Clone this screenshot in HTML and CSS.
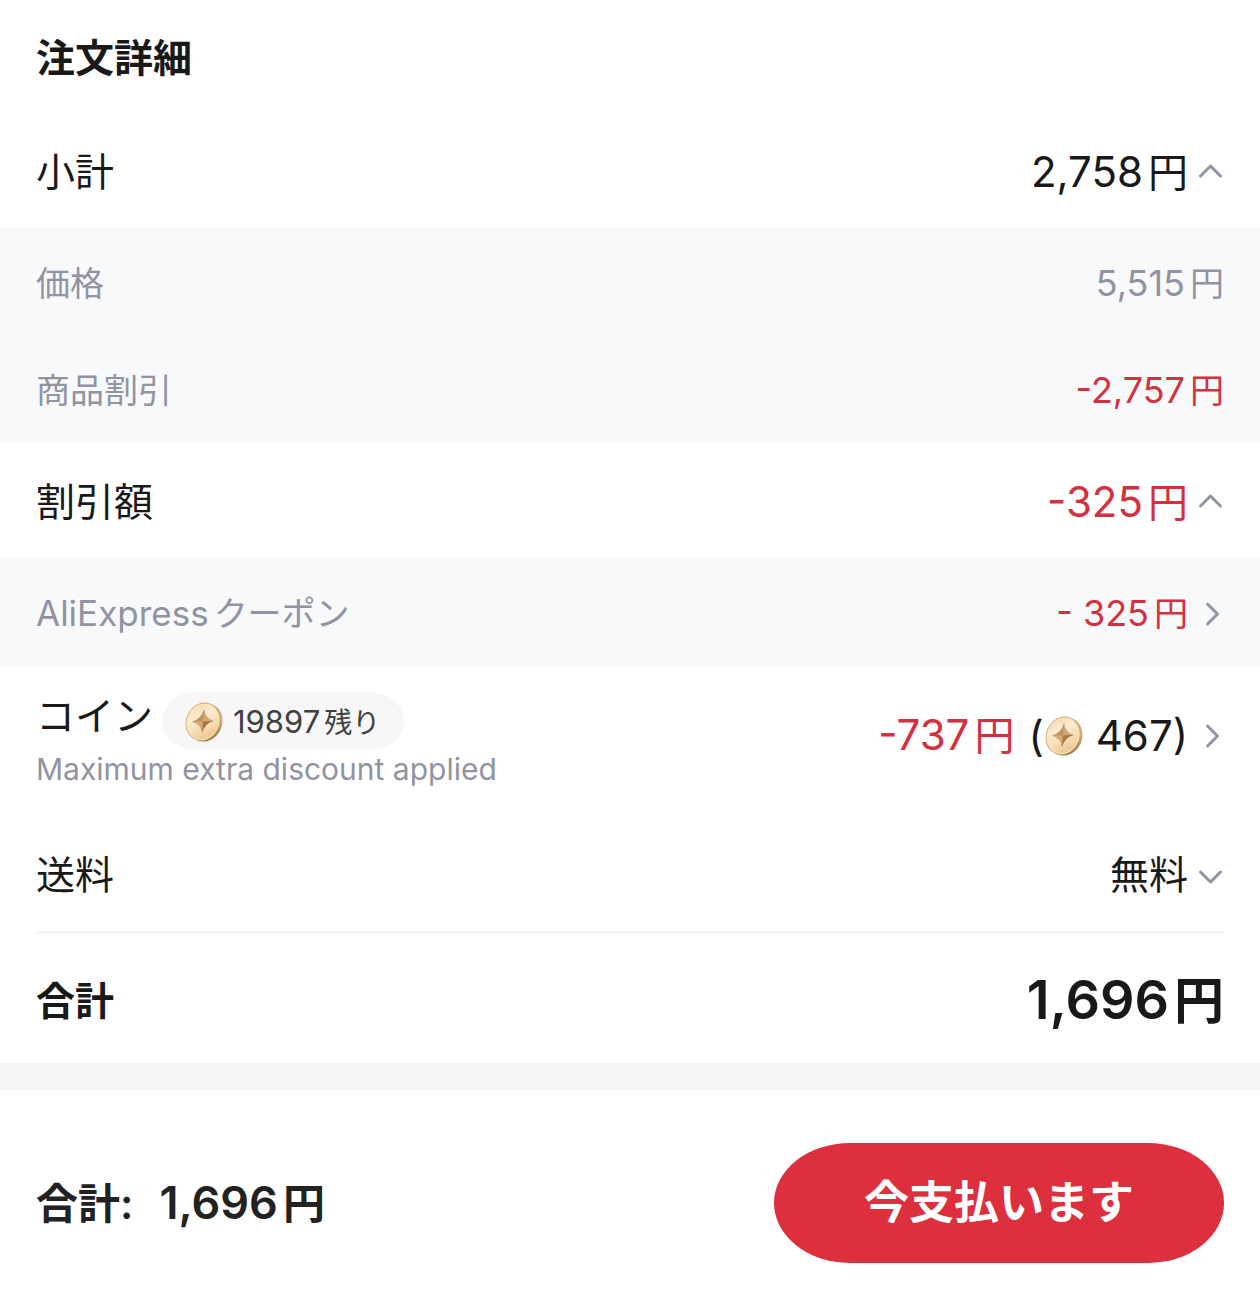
FILE: index.html
```html
<!DOCTYPE html>
<html lang="ja">
<head>
<meta charset="utf-8">
<meta name="viewport" content="width=device-width, initial-scale=1">
<title>注文詳細</title>
<link rel="stylesheet" href="styles.css">
</head>
<body>
<svg class="defs" aria-hidden="true">
  <defs>
    <linearGradient id="face" x1="0" y1="0" x2="1" y2="1">
      <stop offset="0" stop-color="#f0d3a8"/>
      <stop offset="0.35" stop-color="#fbebd0"/>
      <stop offset="0.6" stop-color="#f7dfb8"/>
      <stop offset="1" stop-color="#e6b878"/>
    </linearGradient>
    <linearGradient id="rim" x1="0" y1="0" x2="1" y2="1">
      <stop offset="0" stop-color="#c79a62"/>
      <stop offset="0.6" stop-color="#d9ab70"/>
      <stop offset="1" stop-color="#7d5433"/>
    </linearGradient>
    <symbol id="coin" viewBox="0 0 40 42">
      <ellipse cx="21" cy="21.5" rx="17" ry="19.5" transform="rotate(24 21 21.5)" fill="url(#rim)"/>
      <ellipse cx="19" cy="20.7" rx="17" ry="19.5" transform="rotate(24 19 20.7)" fill="#cfa46c"/>
      <ellipse cx="19" cy="20.7" rx="16.2" ry="18.7" transform="rotate(24 19 20.7)" fill="#fbe6c2"/>
      <ellipse cx="19" cy="20.7" rx="15.2" ry="17.7" transform="rotate(24 19 20.7)" fill="url(#face)"/>
      <path d="M20 8 Q20.500 17 29.500 20 Q21 22 18 32 Q17 23 8 20.500 Q17 18.500 20 8Z" fill="#c0925f"/>
      <path d="M20 8 Q20.500 17 29.500 20 L19 20.400Z" fill="#d3a873"/>
      <path d="M18 32 Q17 23 8 20.500 L19 20.400Z" fill="#d5ac78"/>
      <path d="M29.500 20 Q21 22 18 32 L19 20.400Z" fill="#a87647"/>
    </symbol>
    <symbol id="up" viewBox="0 0 28 28"><path d="M4.500 18 L14.500 8 L24.500 18"/></symbol>
    <symbol id="down" viewBox="0 0 28 28"><path d="M4.500 11 L14.500 21 L24.500 11"/></symbol>
    <symbol id="right" viewBox="0 0 28 28"><path d="M11.500 4 L21.500 14 L11.500 24"/></symbol>
  </defs>
</svg>
<main class="order">
  <h1 class="row title">注文詳細</h1>

  <div class="row">
    <span>小計</span>
    <button class="value" type="button" aria-expanded="true" aria-label="小計 2,758円">
      <span class="amount">2,758<span class="yen">円</span></span>
      <svg class="chevron"><use href="#up"/></svg>
    </button>
  </div>
  <div class="band">
    <div class="row minor"><span>価格</span><span class="amount">5,515<span class="yen">円</span></span></div>
    <div class="row minor"><span>商品割引</span><span class="amount red">-2,757<span class="yen">円</span></span></div>
  </div>

  <div class="row">
    <span>割引額</span>
    <button class="value" type="button" aria-expanded="true" aria-label="割引額 -325円">
      <span class="amount red">-325<span class="yen">円</span></span>
      <svg class="chevron"><use href="#up"/></svg>
    </button>
  </div>
  <div class="band">
    <div class="row minor">
      <span class="coupon"><span class="latin">AliExpress</span>クーポン</span>
      <button class="value" type="button" aria-label="クーポン - 325円">
        <span class="amount red">- 325<span class="yen">円</span></span>
        <svg class="chevron"><use href="#right"/></svg>
      </button>
    </div>
  </div>

  <div class="row coins">
    <div>
      <div class="coin-head">
        <span>コイン</span>
        <span class="pill"><svg class="coin"><use href="#coin"/></svg><span class="balance"><span class="latin">19897</span>残り</span></span>
      </div>
      <p class="note">Maximum extra discount applied</p>
    </div>
    <button class="value" type="button" aria-label="コイン -737円">
      <span class="amount red">-737<span class="yen">円</span></span>
      <span class="amount used">(<svg class="coin"><use href="#coin"/></svg><span class="count">467)</span></span>
      <svg class="chevron"><use href="#right"/></svg>
    </button>
  </div>

  <div class="row">
    <span>送料</span>
    <button class="value" type="button" aria-expanded="false" aria-label="送料 無料">
      <span>無料</span>
      <svg class="chevron"><use href="#down"/></svg>
    </button>
  </div>
  <hr class="rule">
  <div class="row total">
    <span>合計</span>
    <span class="amount">1,696<span class="yen">円</span></span>
  </div>
</main>
<footer class="checkout">
  <p class="sum"><span>合計:</span><span class="amount">1,696<span class="yen">円</span></span></p>
  <button class="pay" type="button">今支払います</button>
</footer>
</body>
</html>
```
FILE: styles.css
```css
* { box-sizing: border-box; }

body {
  margin: 0;
  background: #fff;
  color: #191919;
  font-family: Inter, "Noto Sans CJK JP", sans-serif;
  font-size: 39px;
  line-height: 48px;
}

h1, p { margin: 0; }

button {
  border: 0;
  padding: 0;
  background: none;
  color: inherit;
  font: inherit;
  cursor: pointer;
}

.defs { position: absolute; width: 0; height: 0; }

.row {
  display: flex;
  align-items: center;
  justify-content: space-between;
  min-height: 116px;
  padding: 4px 36px 0;
}

.title {
  min-height: 112px;
  font-size: 39px;
  font-weight: 700;
}

.value { display: flex; align-items: center; gap: 8px; }

.amount { font-size: 42px; white-space: nowrap; }
.yen { margin-left: 5px; font-size: 40px; }
.red { color: #d3313f; }

.chevron {
  width: 28px;
  height: 28px;
  fill: none;
  stroke: #9094a2;
  stroke-width: 3px;
  stroke-linecap: round;
  stroke-linejoin: round;
}

.band { background: #f8f9fb; }

.minor { min-height: 107px; color: #9193a3; font-size: 34px; }
.minor .amount { font-size: 36px; }
.minor .yen { font-size: 34px; }
.minor .latin { margin-right: 5px; font-size: 35px; }

.coins { min-height: 150px; padding-top: 0; align-items: flex-start; }
.coins .value { margin-top: 46px; }
.coin-head { display: flex; align-items: flex-start; gap: 9px; margin-top: 27px; }

.pill {
  display: flex;
  align-items: center;
  gap: 9px;
  height: 58px;
  padding: 2px 24px 0 22px;
  border-radius: 34px / 29px;
  background: #f7f7f7;
  color: #404040;
  font-size: 28px;
}
.pill .latin { margin-right: 4px; font-size: 31px; }

.coin { width: 40px; height: 42px; }
.note { color: #9193a3; font-size: 30px; line-height: 38px; }

.used { display: flex; align-items: center; margin-left: 6px; }
.count { margin-left: 12px; }

.rule {
  height: 3px;
  margin: 0 36px;
  border: 0;
  background: #f4f4f4;
}

.total { min-height: 129px; font-weight: 700; }
.total .amount { font-size: 54px; font-weight: 600; }
.total .yen { font-size: 50px; }

.checkout {
  display: flex;
  align-items: center;
  justify-content: space-between;
  padding: 53px 36px;
  border-top: 27px solid #f4f4f4;
}

.sum {
  display: flex;
  align-items: baseline;
  gap: 26px;
  color: #222;
  font-size: 42px;
  font-weight: 600;
}
.sum .amount { font-size: 45px; }
.sum .yen { font-size: 42px; }

.pay {
  width: 450px;
  height: 120px;
  border-radius: 76px / 60px;
  background: #dd2f3d;
  color: #fff;
  font-size: 45px;
  font-weight: 600;
}
```
